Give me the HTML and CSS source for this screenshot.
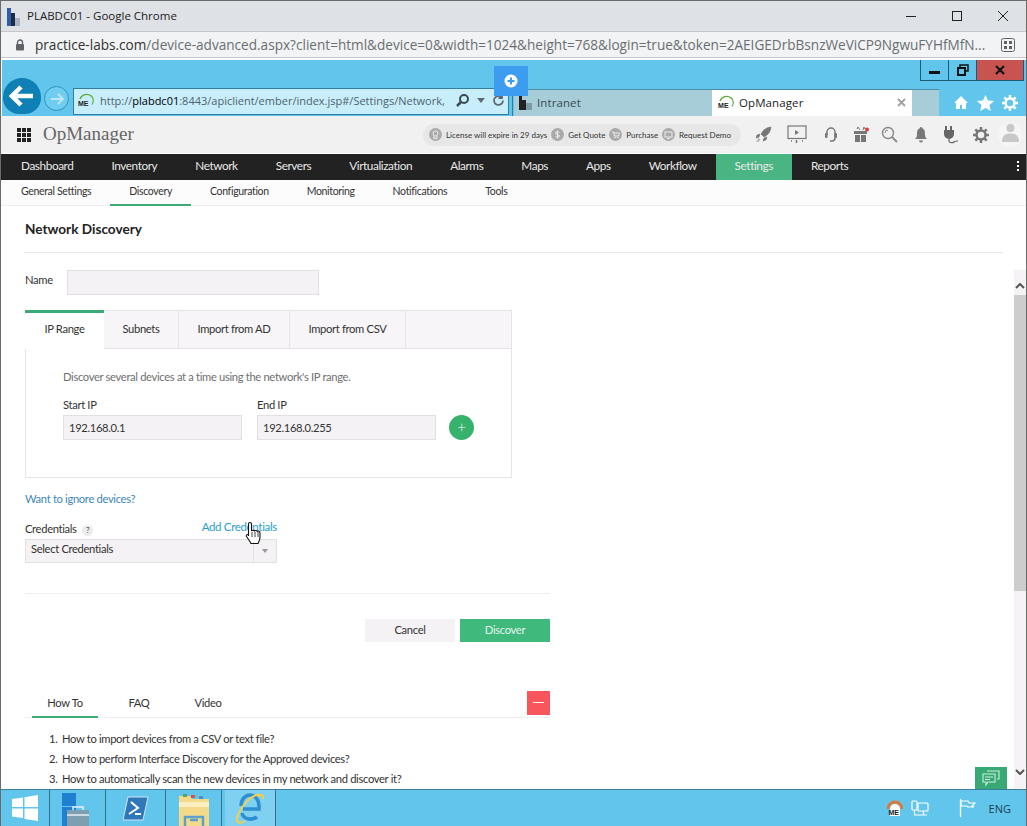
FILE: index.html
```html
<!DOCTYPE html>
<html lang="en">
<head>
  <meta charset="UTF-8">
  <meta name="viewport" content="width=device-width, initial-scale=1.0">
  <title>PLABDC01 - Google Chrome</title>
  <link rel="stylesheet" href="styles.css">
</head>
<body>
  <div class="window">
    <div class="title-bar">
      <svg class="title-logo" width="16" height="20" viewBox="0 0 16 20"><path d="M1 2h4v18H1z" fill="#2f5fa8"/><path d="M5 7h4v13H5z" fill="#1d2a44"/><path d="M9 12h5v8H9z" fill="#a9b4c2"/></svg>
      <span class="title-text">PLABDC01 - Google Chrome</span>
      <div class="win-buttons">
        <svg width="12" height="12" viewBox="0 0 12 12"><path d="M1 6.5h10" stroke="#222" fill="none"/></svg>
        <svg width="12" height="12" viewBox="0 0 12 12"><rect x="1.5" y="1.5" width="9" height="9" stroke="#222" fill="none"/></svg>
        <svg width="12" height="12" viewBox="0 0 12 12"><path d="M1 1l10 10M11 1L1 11" stroke="#222" fill="none"/></svg>
      </div>
    </div>
    <div class="url-bar">
      <svg class="url-lock" width="10" height="12" viewBox="0 0 10 12"><path d="M2.5 5V3.5a2.5 2.5 0 0 1 5 0V5" stroke="#5f6368" stroke-width="1.4" fill="none"/><rect x="1" y="5" width="8" height="6.5" rx="1" fill="#5f6368"/></svg>
      <span class="url-text"><span class="url-host">practice-labs.com</span>/device-advanced.aspx?client=html&amp;device=0&amp;width=1024&amp;height=768&amp;login=true&amp;token=2AEIGEDrbBsnzWeViCP9NgwuFYHfMfN...</span>
      <svg class="url-qr" width="14" height="14" viewBox="0 0 14 14"><rect x="0.5" y="0.5" width="13" height="13" rx="2" fill="none" stroke="#5f6368"/><path d="M3 3h3v3H3zM8 3h3v3H8zM3 8h3v3H3zM8 8h3v3H8z" fill="#5f6368"/></svg>
    </div>

    <div class="ie-bar">
      <div class="ie-controls">
        <div class="ctl ctl-min"><span></span></div>
        <div class="ctl ctl-restore"><svg width="12" height="12" viewBox="0 0 12 12"><path d="M3 3V1h8v6H9" fill="none" stroke="#111" stroke-width="1.5"/><rect x="1" y="4" width="7" height="7" fill="none" stroke="#111" stroke-width="2"/></svg></div>
        <div class="ctl ctl-close"><svg width="10" height="10" viewBox="0 0 10 10"><path d="M1 1l8 8M9 1L1 9" stroke="#111" stroke-width="2.2"/></svg></div>
      </div>
      <div class="float-btn"><svg width="14" height="14" viewBox="0 0 14 14"><circle cx="7" cy="7" r="6.5" fill="#fff"/><path d="M7 3.5v7M3.5 7h7" stroke="#3b9cf0" stroke-width="2"/></svg></div>
      <div class="back-btn"><svg width="26" height="22" viewBox="0 0 26 22"><path d="M12 2L3 11l9 9M3 11h21" stroke="#fff" stroke-width="4.5" fill="none"/></svg></div>
      <div class="forward-btn"><svg width="14" height="12" viewBox="0 0 14 12"><path d="M8 1l5 5-5 5M13 6H1" stroke="#c2e6f5" stroke-width="1.8" fill="none"/></svg></div>
      <div class="address">
        <svg class="me-icon" width="18" height="15" viewBox="0 0 18 15"><path d="M3 6a7 7 0 0 1 11-3M14 2.5a7 7 0 0 1 1 9" stroke="#5cab3e" stroke-width="1.3" fill="none"/><text x="1" y="13" class="me-text">ME</text></svg>
        <span class="address-text">http://<b>plabdc01</b>:8443/apiclient/ember/index.jsp#/Settings/Network,</span>
        <svg width="15" height="15" viewBox="0 0 15 15"><circle cx="9" cy="6" r="4" fill="none" stroke="#3c4a52" stroke-width="2"/><path d="M6 9l-4 4" stroke="#3c4a52" stroke-width="2.5"/></svg>
        <svg class="address-caret" width="8" height="5" viewBox="0 0 8 5"><path d="M0 0h8L4 5z" fill="#5c6a72"/></svg>
        <svg width="13" height="13" viewBox="0 0 13 13"><path d="M11 6.5a4.5 4.5 0 1 1-1.5-3.4M10 0.5V4H6.5" fill="none" stroke="#5c6a72" stroke-width="1.8"/></svg>
      </div>
      <div class="ie-tabs">
        <div class="ie-tab ie-tab-off">
          <svg width="13" height="15" viewBox="0 0 13 15"><path d="M0 1h3v14H0zM3 5h4v10H3z" fill="#222"/><path d="M7 8h6v7H7z" fill="#7d9aa6"/></svg>
          <span>Intranet</span>
        </div>
        <div class="ie-tab ie-tab-on">
          <svg class="me-icon" width="18" height="15" viewBox="0 0 18 15"><path d="M3 6a7 7 0 0 1 11-3M14 2.5a7 7 0 0 1 1 9" stroke="#5cab3e" stroke-width="1.3" fill="none"/><text x="1" y="13" class="me-text">ME</text></svg>
          <span>OpManager</span>
          <svg class="tab-x" width="9" height="9" viewBox="0 0 9 9"><path d="M1 1l7 7M8 1L1 8" stroke="#a0a0a0" stroke-width="1.8"/></svg>
        </div>
        <div class="ie-tab-blank"></div>
      </div>
      <div class="ie-tools">
        <svg width="16" height="15" viewBox="0 0 16 15"><path d="M8 1L1 8h2v6h4v-4h2v4h4V8h2z" fill="#fff"/></svg>
        <svg width="17" height="16" viewBox="0 0 17 16"><path d="M8.5 0L11 5.5l6 .6-4.5 4 1.3 5.9-5.3-3-5.3 3 1.3-5.9L0 6.1l6-.6z" fill="#fff"/></svg>
        <svg width="16" height="16" viewBox="0 0 16 16"><circle cx="8" cy="8" r="4.5" fill="none" stroke="#fff" stroke-width="2.5"/><path d="M8 0v3M8 13v3M0 8h3M13 8h3M2.3 2.3l2.1 2.1M11.6 11.6l2.1 2.1M13.7 2.3l-2.1 2.1M4.4 11.6l-2.1 2.1" stroke="#fff" stroke-width="2.5"/></svg>
      </div>
    </div>

    <div class="app-header">
      <svg class="apps-grid" width="14" height="14" viewBox="0 0 14 14"><path d="M0 0h4v4H0zM5 0h4v4H5zM10 0h4v4h-4zM0 5h4v4H0zM5 5h4v4H5zM10 5h4v4h-4zM0 10h4v4H0zM5 10h4v4H5zM10 10h4v4h-4z" fill="#222"/></svg>
      <span class="app-name">OpManager</span>
      <div class="license-pill">
        <span class="pill-item"><svg class="pill-icon" width="13" height="13" viewBox="0 0 13 13"><circle cx="6.5" cy="6.5" r="6.5" fill="#aaa"/><circle cx="6.5" cy="5.5" r="2.5" fill="none" stroke="#eee"/><path d="M5 8v3l1.5-1L8 11V8" fill="none" stroke="#eee"/></svg>License will expire in 29 days</span>
        <span class="pill-item"><svg class="pill-icon" width="13" height="13" viewBox="0 0 13 13"><circle cx="6.5" cy="6.5" r="6.5" fill="#aaa"/><path d="M8.5 4.5C8 3.5 4.5 3.5 4.5 5c0 2 4 1 4 3 0 1.500-3.500 1.500-4 .5M6.5 2.5v8" fill="none" stroke="#eee"/></svg>Get Quote</span>
        <span class="pill-item"><svg class="pill-icon" width="13" height="13" viewBox="0 0 13 13"><circle cx="6.5" cy="6.5" r="6.5" fill="#aaa"/><path d="M3 4h1.5l1 4h4l1-3H5" fill="none" stroke="#eee"/><circle cx="6" cy="9.5" r=".8" fill="#eee"/><circle cx="9" cy="9.5" r=".8" fill="#eee"/></svg>Purchase</span>
        <span class="pill-item"><svg class="pill-icon" width="13" height="13" viewBox="0 0 13 13"><circle cx="6.5" cy="6.5" r="6.5" fill="#aaa"/><rect x="3" y="4" width="7" height="5" fill="none" stroke="#eee"/><path d="M5 10.5h3" stroke="#eee"/></svg>Request Demo</span>
      </div>
      <div class="header-icons">
        <svg width="17" height="17" viewBox="0 0 17 17"><path d="M16 1c-5 .5-8 3-10 7l3 3c4-2 6.500-5 7-10zM5 8L2 9l-1 3 3-1zM9 12l-1 3 3-1 1-3zM4 12l-2 4M5 13l-2 3" fill="#777" stroke="#777" stroke-width=".6"/></svg>
        <svg width="20" height="19" viewBox="0 0 20 19"><rect x="1" y="1" width="18" height="12.5" fill="none" stroke="#777" stroke-width="1.2"/><path d="M8 5l4 2.5L8 10z" fill="#777"/><path d="M4 16h1M9.5 15v3M15 16h1" stroke="#777" stroke-width="1.5"/></svg>
        <svg width="14" height="16" viewBox="0 0 14 16"><path d="M3 8V5a4 4 0 0 1 8 0v6a3 3 0 0 1-3 3H6" fill="none" stroke="#777" stroke-width="1.5"/><rect x="1" y="6" width="2.5" height="5" rx="1" fill="#777"/><rect x="10.5" y="6" width="2.5" height="5" rx="1" fill="#777"/></svg>
        <svg width="16" height="17" viewBox="0 0 16 17"><path d="M1 5h13v3H1zM2 9h5v7H2zM8 9h5v7H8z" fill="#777"/><path d="M4 3l1-2 2 3M10 4l1-3 1 2" stroke="#777" fill="none"/><circle cx="14" cy="3.5" r="2" fill="#e23b3b"/></svg>
        <svg width="17" height="17" viewBox="0 0 17 17"><circle cx="7" cy="7" r="5.5" fill="none" stroke="#888" stroke-width="1.4"/><path d="M4 7a3 3 0 0 1 3-3" fill="none" stroke="#888"/><path d="M11 11l5 5" stroke="#888" stroke-width="1.8"/></svg>
        <svg width="14" height="16" viewBox="0 0 14 16"><path d="M7 0a1.5 1.5 0 0 1 1.5 1.5C11 2.5 11 5 11 8c0 2 1 3 2 4H1c1-1 2-2 2-4 0-3 0-5.5 2.5-6.5A1.5 1.5 0 0 1 7 0zM5 13.5h4a2 2 0 0 1-4 0z" fill="#777"/></svg>
        <svg width="16" height="18" viewBox="0 0 16 18"><path d="M3 0v4M8 0v4" stroke="#666" stroke-width="2"/><path d="M1 4h10v4a5 5 0 0 1-10 0z" fill="#666"/><path d="M6 13v2c0 2 4 2 5 1s2-1 4-1" fill="none" stroke="#666" stroke-width="1.2"/></svg>
        <svg width="16" height="16" viewBox="0 0 16 16"><circle cx="8" cy="8" r="4.5" fill="none" stroke="#777" stroke-width="2.5"/><path d="M8 0v3M8 13v3M0 8h3M13 8h3M2.3 2.3l2.1 2.1M11.6 11.6l2.1 2.1M13.7 2.3l-2.1 2.1M4.4 11.6l-2.1 2.1" stroke="#777" stroke-width="2.5"/></svg>
        <div class="avatar"><svg width="17" height="20" viewBox="0 0 17 20"><circle cx="8.5" cy="5" r="4" fill="#c8c8c8"/><path d="M0 19c0-6 3-8.5 8.5-8.5S17 13 17 19z" fill="#c8c8c8"/></svg></div>
      </div>
    </div>

    <nav class="main-nav">
      <a>Dashboard</a>
      <a>Inventory</a>
      <a>Network</a>
      <a>Servers</a>
      <a>Virtualization</a>
      <a>Alarms</a>
      <a>Maps</a>
      <a>Apps</a>
      <a>Workflow</a>
      <a class="active">Settings</a>
      <a>Reports</a>
      <div class="nav-more"><i></i><i></i><i></i></div>
    </nav>
    <nav class="sub-nav">
      <a>General Settings</a>
      <a class="active">Discovery</a>
      <a>Configuration</a>
      <a>Monitoring</a>
      <a>Notifications</a>
      <a>Tools</a>
    </nav>

    <div class="page-head">
      <h1>Network Discovery</h1>
    </div>

    <div class="page-body">
      <main class="form-area">
        <div class="name-row">
          <label>Name</label>
          <div class="field name-field"></div>
        </div>

        <div class="disc-tabs">
          <div class="disc-tab active tab-ip">IP Range</div>
          <div class="disc-tab tab-sub">Subnets</div>
          <div class="disc-tab tab-ad">Import from AD</div>
          <div class="disc-tab tab-csv">Import from CSV</div>
          <div class="disc-tab tab-empty"></div>
        </div>
        <div class="disc-panel">
          <p class="hint">Discover several devices at a time using the network's IP range.</p>
          <div class="ip-row">
            <div class="ip-col">
              <label>Start IP</label>
              <div class="field ip-field">192.168.0.1</div>
            </div>
            <div class="ip-col">
              <label>End IP</label>
              <div class="field ip-field">192.168.0.255</div>
            </div>
            <div class="add-btn">+</div>
          </div>
        </div>

        <a class="ignore-link">Want to ignore devices?</a>

        <div class="cred-block">
          <div class="cred-labels">
            <label>Credentials <span class="help">?</span></label>
            <a class="add-link">Add Credentials</a>
          </div>
          <div class="field cred-select">
            <span>Select Credentials</span>
            <div class="cred-caret"><i></i></div>
          </div>
          <svg class="cursor" width="17" height="24" viewBox="0 0 17 24"><path d="M5 1.5c1 0 1.500.7 1.500 1.500v7c.5-1 2.500-1 3 0 .5-.8 2.300-.8 2.800.3.700-.5 2.700-.3 2.700 1.700v4c0 3-1 4.500-2 6.500H6c-1-2-2-3.500-4.500-7-.8-1.200.8-2.700 2-1.500L3.500 15V3c0-.8.500-1.500 1.500-1.500z" fill="#fff" stroke="#111" stroke-width="1.1"/><path d="M7 11v5M10 11v5M13 11v5" stroke="#111" stroke-width=".8"/></svg>
        </div>

        <div class="form-actions">
          <button class="btn-cancel">Cancel</button>
          <button class="btn-discover">Discover</button>
        </div>

        <div class="help-tabs">
          <a class="active">How To</a>
          <a>FAQ</a>
          <a>Video</a>
          <div class="collapse-btn"></div>
        </div>
        <ol class="help-list">
          <li>How to import devices from a CSV or text file?</li>
          <li>How to perform Interface Discovery for the Approved devices?</li>
          <li>How to automatically scan the new devices in my network and discover it?</li>
        </ol>
      </main>
      <div class="scrollbar">
        <svg width="10" height="6" viewBox="0 0 10 6"><path d="M1 5l4-4 4 4" fill="none" stroke="#555" stroke-width="2"/></svg>
        <div class="scroll-thumb"></div>
        <svg width="10" height="6" viewBox="0 0 10 6"><path d="M1 1l4 4 4-4" fill="none" stroke="#555" stroke-width="2"/></svg>
      </div>
      <div class="chat-btn"><svg width="18" height="17" viewBox="0 0 18 17"><path d="M5 1h12v8h-2M1 4h12v8H6l-2 3v-3H1z" fill="none" stroke="#cfeedd" stroke-width="1.1"/><path d="M3 7h8M3 9.5h5" stroke="#cfeedd"/></svg></div>
    </div>

    <footer class="taskbar">
      <div class="task-cell cell-start"><svg width="26" height="26" viewBox="0 0 26 26"><path d="M0 4l11-1.5V12H0zM12.5 2.3L26 0v12H12.5zM0 13.5h11V23L0 21.5zM12.5 13.5H26V26l-13.5-2z" fill="#fff"/></svg></div>
      <div class="task-cell cell-server"><svg width="31" height="33" viewBox="0 0 31 33"><path d="M0 0h14v13H0zM0 14h14v19H0z" fill="#1f7fd0"/><path d="M5 17h22v16H5z" fill="#7d9fb0"/><path d="M11 17v-3h10v3" fill="none" stroke="#e8eef2" stroke-width="1.5"/><path d="M5 22h22" stroke="#e8eef2" stroke-width="1.5"/></svg></div>
      <div class="task-cell cell-ps"><svg width="26" height="25" viewBox="0 0 26 25"><path d="M5 1h20l-5 23H0z" fill="#2f77b8" stroke="#cfe4f2"/><path d="M8 6l7 6-9 6M12 18h6" fill="none" stroke="#fff" stroke-width="2"/></svg></div>
      <div class="task-cell cell-folder"><svg width="30" height="33" viewBox="0 0 30 33"><path d="M0 3h11l2 3h17v27H0z" fill="#f3da8a"/><path d="M0 9h30v5H0z" fill="#fbeec0"/><path d="M4 1h4v3H4z" fill="#5aa457"/><path d="M12 2h4v3h-4z" fill="#d9534f"/><path d="M20 3h4v3h-4z" fill="#4a90c4"/><path d="M6 33v-9h18v9M11 27h8" fill="none" stroke="#5c9fc8" stroke-width="2.5"/></svg></div>
      <div class="task-cell cell-ie"><svg width="28" height="33" viewBox="0 0 28 33"><path d="M5 13a9 11 0 0 1 18 0v3H7M6 20c1 6 9 8 15 4" fill="none" stroke="#2d8ed2" stroke-width="3.5"/><path d="M25 2C17 0 5 12 1 25c-1 5 3 6 8 3M21 3c3-1 7-2 6 3" fill="none" stroke="#f1cf4a" stroke-width="2"/></svg></div>
      <div class="tray">
        <svg width="16" height="17" viewBox="0 0 16 17"><path d="M1 9a7 7 0 0 1 14 0" fill="none" stroke="#d97a3c" stroke-width="3"/><path d="M3 16V9a5 5 0 0 1 10 0v7z" fill="#fff"/><text x="1.5" y="15" class="me-text">ME</text></svg>
        <svg class="tray-net" width="18" height="17" viewBox="0 0 18 17"><rect x="7" y="3" width="10" height="8" rx="1" fill="none" stroke="#fff" stroke-width="1.2"/><rect x="1" y="1" width="5" height="9" rx="1" fill="none" stroke="#fff" stroke-width="1.2"/><path d="M3.5 10v5h9v-4M9 15h7" fill="none" stroke="#fff" stroke-width="1.2"/></svg>
        <svg class="tray-flag" width="17" height="18" viewBox="0 0 17 18"><path d="M1.5 0v18" stroke="#fff" stroke-width="1.3"/><path d="M2 2h7l1 2h6l-3 3 2 1H9L8 7H2z" fill="none" stroke="#fff" stroke-width="1.2"/></svg>
        <span class="tray-lang">ENG</span>
      </div>
    </footer>
  </div>
</body>
</html>
```

FILE: styles.css
```css
* {
  box-sizing: border-box;
}

html, body {
  margin: 0;
  padding: 0;
}

body {
  width: 1027px;
  height: 826px;
  overflow: hidden;
  background: #fff;
  font-family: 'Lato', sans-serif;
  color: #333;
}

svg {
  flex-shrink: 0;
}

.window {
  position: relative;
  display: flex;
  flex-direction: column;
  height: 826px;
  border-left: 1px solid #6a6a6a;
  border-right: 1px solid #6a6a6a;
  overflow: hidden;
}

/* chrome title + url */
.title-bar {
  display: flex;
  align-items: center;
  height: 31px;
  padding-left: 5px;
  padding-bottom: 1px;
  background: #dee1e6;
  border-top: 1px solid #6a6a6a;
  font-family: 'Open Sans', sans-serif;
  font-size: 11.5px;
  color: #222;
}

.title-logo {
  margin-right: 5px;
}

.win-buttons {
  display: flex;
  gap: 34px;
  margin-left: auto;
  margin-right: 17px;
}

.url-bar {
  display: flex;
  align-items: center;
  height: 27px;
  padding-left: 14px;
  background: #f1f3f4;
  border-top: 1px solid #c4c6c9;
  border-bottom: 1px solid #c4c6c9;
  font-family: 'Open Sans', sans-serif;
  font-size: 13.6px;
  color: #6b6f73;
  white-space: nowrap;
}

.url-text {
  margin-left: 10px;
}

.url-host {
  color: #333;
}

.url-qr {
  margin-left: auto;
  margin-right: 11px;
}

/* IE bar */
.ie-bar {
  position: relative;
  display: flex;
  align-items: flex-end;
  height: 56px;
  margin-top: 2px;
  margin-left: 1px;
  padding-left: 1px;
  background: #62c6ec;
  flex-shrink: 0;
}

.ie-controls {
  position: absolute;
  top: 0;
  right: 2px;
  display: flex;
  height: 21px;
  border: 1px solid #1c5a78;
  border-top: none;
}

.ctl {
  display: flex;
  align-items: center;
  justify-content: center;
  width: 28px;
  border-right: 1px solid #1c5a78;
}

.ctl-min span {
  display: block;
  width: 11px;
  height: 3px;
  margin-top: 4px;
  background: #111;
}

.ctl-close {
  width: 46px;
  background: #c75450;
  border-right: none;
}

.float-btn {
  position: absolute;
  top: 6px;
  left: 492px;
  display: flex;
  align-items: center;
  justify-content: center;
  width: 34px;
  height: 30px;
  background: #3b9cf0;
  z-index: 2;
}

.back-btn {
  display: flex;
  align-items: center;
  justify-content: center;
  width: 38px;
  height: 36px;
  margin-bottom: 2px;
  background: #0e80b6;
  border-radius: 19px 19px 16px 16px;
}

.forward-btn {
  display: flex;
  align-items: center;
  justify-content: center;
  width: 25px;
  height: 25px;
  margin: 0 4px 5px 3px;
  border: 1px solid #2f93bf;
  border-radius: 50%;
  background: #6fcdf0;
}

.address {
  display: flex;
  align-items: center;
  gap: 5px;
  width: 436px;
  height: 27px;
  margin-bottom: 1px;
  padding: 0 3px 2px;
  background: #c8eefb;
  border: 1px solid #2f7fa3;
  font-family: 'Open Sans', sans-serif;
  font-size: 11px;
  color: #50626c;
  white-space: nowrap;
}

.address-text {
  flex: 1;
  overflow: hidden;
}

.address-text b {
  font-weight: 400;
  color: #000;
}

.address-caret {
  margin: 0 2px;
}

.me-text {
  font-family: 'Liberation Sans', sans-serif;
  font-size: 7px;
  font-weight: 700;
  fill: #222;
}

.ie-tabs {
  display: flex;
  height: 27px;
  margin-left: 3px;
  padding-left: 1px;
  border-left: 1px solid #2f7fa3;
}

.ie-tab {
  display: flex;
  align-items: center;
  gap: 5px;
  width: 198px;
  padding: 0 0 2px 5px;
  border-top: 1px solid #4b8da6;
  font-family: 'Open Sans', sans-serif;
  font-size: 11.5px;
  letter-spacing: 0.1px;
  color: #222;
}

.ie-tab-off {
  background: #a6cdd8;
  color: #3c4a52;
}

.ie-tab-on {
  width: 200px;
  gap: 4px;
  background: #fff;
}

.tab-x {
  margin-left: auto;
  margin-right: 6px;
}

.ie-tab-blank {
  width: 27px;
  background: #a6cdd8;
  border-top: 1px solid #4b8da6;
}

.ie-tools {
  display: flex;
  align-items: center;
  gap: 8px;
  height: 27px;
  margin-left: 14px;
}

/* app header */
.app-header {
  display: flex;
  align-items: center;
  height: 37px;
  padding-left: 16px;
  background: #f1f1f1;
  flex-shrink: 0;
}

.app-name {
  width: 380px;
  margin-left: 12px;
  font-family: 'Liberation Serif', serif;
  font-size: 19px;
  line-height: 20px;
  margin-bottom: 2px;
  color: #666;
}

.license-pill {
  display: flex;
  align-items: center;
  justify-content: space-between;
  width: 318px;
  height: 22px;
  padding: 0 10px 0 6px;
  border-radius: 11px;
  background: #e7e7e7;
  font-size: 8px;
  color: #333;
  white-space: nowrap;
}

.pill-item {
  display: flex;
  align-items: center;
  gap: 4px;
}

.header-icons {
  display: grid;
  grid-template-columns: 34px 34px 34px 26px 30px 34px 26px 34px 24px;
  align-items: center;
  justify-items: center;
  margin-left: 5px;
}

.avatar {
  display: flex;
  justify-content: center;
  width: 24px;
  height: 24px;
  border-radius: 50%;
  background: #f5f5f5;
}

/* navs */
.main-nav {
  display: flex;
  height: 26px;
  margin-top: 1px;
  padding-left: 1px;
  background: #222;
  flex-shrink: 0;
}

.main-nav a {
  padding: 0 19px;
  font-size: 11.8px;
  letter-spacing: -0.42px;
  line-height: 24px;
  color: #e8e8e8;
}

.main-nav a.active {
  background: #48b583;
}

.nav-more {
  display: flex;
  flex-direction: column;
  gap: 2px;
  margin: 7px 7px 0 auto;
}

.nav-more i {
  width: 2px;
  height: 2px;
  background: #fff;
}

.sub-nav {
  display: flex;
  height: 26px;
  padding-left: 1px;
  background: #fdfcfd;
  border-bottom: 1px solid #eee;
  flex-shrink: 0;
}

.sub-nav a {
  padding: 0 19px;
  font-size: 10.5px;
  letter-spacing: -0.34px;
  line-height: 22px;
  color: #333;
}

.sub-nav a.active {
  border-bottom: 2px solid #3cab77;
  height: 26px;
}

.page-head {
  margin: 0 23px 0 23px;
  height: 47px;
  padding-top: 14px;
  border-bottom: 1px solid #e8e8e8;
  flex-shrink: 0;
}

.page-head h1 {
  margin: 0 0 0 1px;
  font-size: 13.6px;
  font-weight: 700;
  line-height: 18px;
  color: #222;
}

/* form */
.page-body {
  position: relative;
  display: flex;
  flex: 1;
  min-height: 0;
  background: #fff;
}

.form-area {
  flex: 1;
  min-width: 0;
  padding: 17px 0 0 24px;
  overflow: hidden;
  font-size: 11.2px;
  letter-spacing: -0.33px;
  color: #333;
}

.name-row {
  display: flex;
  align-items: center;
}

.name-row label {
  width: 42px;
  margin-top: -7px;
}

.field {
  background: #f4f2f4;
  border: 1px solid #e2e0e2;
}

.name-field {
  width: 252px;
  height: 25px;
}

.disc-tabs {
  display: flex;
  width: 487px;
  height: 39px;
  margin-top: 15px;
}

.disc-tab {
  height: 39px;
  background: #f7f5f7;
  border: 1px solid #e6e4e6;
  border-left: none;
  line-height: 36px;
  text-align: center;
}

.tab-ip { width: 79px; }
.tab-sub { width: 75px; }
.tab-ad { width: 111px; }
.tab-csv { width: 116px; }
.tab-empty { width: 106px; }

.disc-tab.active {
  background: #fff;
  border: none;
  border-top: 3px solid #3cab77;
  line-height: 32px;
}

.disc-panel {
  width: 487px;
  height: 129px;
  padding: 21px 0 0 37px;
  border: 1px solid #e6e4e6;
  border-top: none;
}

.hint {
  margin: 0;
  line-height: 14px;
  color: #6f6f6f;
}

.ip-row {
  display: flex;
  align-items: flex-end;
  gap: 15px;
  margin-top: 14px;
}

.ip-col label {
  display: block;
  margin-bottom: 4px;
  line-height: 13px;
}

.ip-field {
  width: 179px;
  height: 25px;
  padding-left: 5px;
  line-height: 23px;
}

.add-btn {
  width: 25px;
  height: 25px;
  margin-left: -2px;
  border-radius: 50%;
  background: #37b26c;
  font-size: 15px;
  font-weight: 300;
  line-height: 25px;
  text-align: center;
  color: #fff;
}

.ignore-link {
  display: block;
  margin-top: 14px;
  line-height: 13px;
  color: #3d87b8;
}

.cred-block {
  position: relative;
  width: 252px;
  margin-top: 15px;
}

.cred-labels {
  display: flex;
  justify-content: space-between;
  height: 19px;
}

.cred-labels label {
  padding-top: 2px;
}

.help {
  display: inline-block;
  width: 11px;
  height: 11px;
  margin-left: 3px;
  border-radius: 50%;
  background: #ececec;
  font-size: 7px;
  line-height: 11px;
  text-align: center;
}

.add-link {
  font-size: 11.5px;
  color: #2b9dd0;
}

.cred-select {
  display: flex;
  justify-content: space-between;
  height: 24px;
  line-height: 18px;
  padding-left: 5px;
}

.cred-caret {
  display: flex;
  align-items: center;
  justify-content: center;
  width: 23px;
  border-left: 1px solid #e2e0e2;
}

.cred-caret i {
  width: 0;
  height: 0;
  border-left: 3px solid transparent;
  border-right: 3px solid transparent;
  border-top: 4px solid #999;
}

.cursor {
  position: absolute;
  top: 1px;
  left: 220px;
}

.form-actions {
  display: flex;
  justify-content: flex-end;
  gap: 5px;
  width: 525px;
  margin-top: 30px;
  padding-top: 25px;
  border-top: 1px solid #eee;
}

.form-actions button {
  width: 90px;
  height: 23px;
  padding: 0 0 2px;
  border: none;
  font-family: 'Lato', sans-serif;
  font-size: 11.2px;
  letter-spacing: -0.33px;
}

.btn-cancel {
  background: #f5f2f5;
  color: #333;
}

.btn-discover {
  background: #3fb97c;
  color: #e4f5ec;
}

.help-tabs {
  position: relative;
  display: flex;
  width: 525px;
  height: 27px;
  margin-top: 49px;
  padding-left: 7px;
  border-bottom: 1px solid #eee;
}

.help-tabs a {
  width: 66px;
  margin-right: 25px;
  line-height: 24px;
  text-align: center;
}

.help-tabs a:nth-child(2) {
  width: 32px;
  margin-right: 35px;
}

.help-tabs a:nth-child(3) {
  width: 36px;
}

.help-tabs a.active {
  height: 27px;
  border-bottom: 2px solid #3cab77;
}

.collapse-btn {
  position: absolute;
  right: 0;
  top: 0;
  width: 23px;
  height: 24px;
  background: #f8565c;
}

.collapse-btn::after {
  content: "";
  position: absolute;
  left: 6px;
  top: 11px;
  width: 11px;
  height: 1px;
  background: #fff;
}

.help-list {
  margin: 11px 0 0;
  padding-left: 35px;
}

.help-list li {
  height: 20px;
  padding-left: 2px;
  line-height: 20px;
}

.scrollbar {
  display: flex;
  flex-direction: column;
  align-items: center;
  width: 12px;
  margin-top: 17px;
  padding: 13px 0 14px;
  background: #f5f3f5;
  flex-shrink: 0;
}

.scroll-thumb {
  width: 12px;
  height: 296px;
  margin: 6px 0 auto;
  background: #cdcdcd;
}

.chat-btn {
  position: absolute;
  right: 19px;
  bottom: 0;
  display: flex;
  align-items: center;
  justify-content: center;
  width: 32px;
  height: 22px;
  background: #36a974;
}

/* windows taskbar */
.taskbar {
  display: flex;
  align-items: flex-end;
  height: 37px;
  background: #62c6ec;
  border-top: 1px solid #3e7d99;
  flex-shrink: 0;
  overflow: hidden;
}

.task-cell {
  display: flex;
  align-items: flex-end;
  justify-content: center;
  height: 36px;
  border-right: 1px solid #37708a;
  overflow: hidden;
}

.cell-start { width: 49px; align-items: center; }
.cell-server { width: 56px; }
.cell-ps { width: 60px; align-items: center; }
.cell-folder { width: 56px; }
.cell-ie { width: 51px; margin-left: 3px; background: #80d1f1; }

.tray {
  display: flex;
  align-items: center;
  gap: 8px;
  height: 36px;
  margin-left: auto;
  margin-right: 15px;
  color: #1c3f52;
}

.tray-flag {
  margin-left: 22px;
}

.tray-lang {
  margin-left: 5px;
  font-family: 'Open Sans', sans-serif;
  font-size: 11px;
}
```
